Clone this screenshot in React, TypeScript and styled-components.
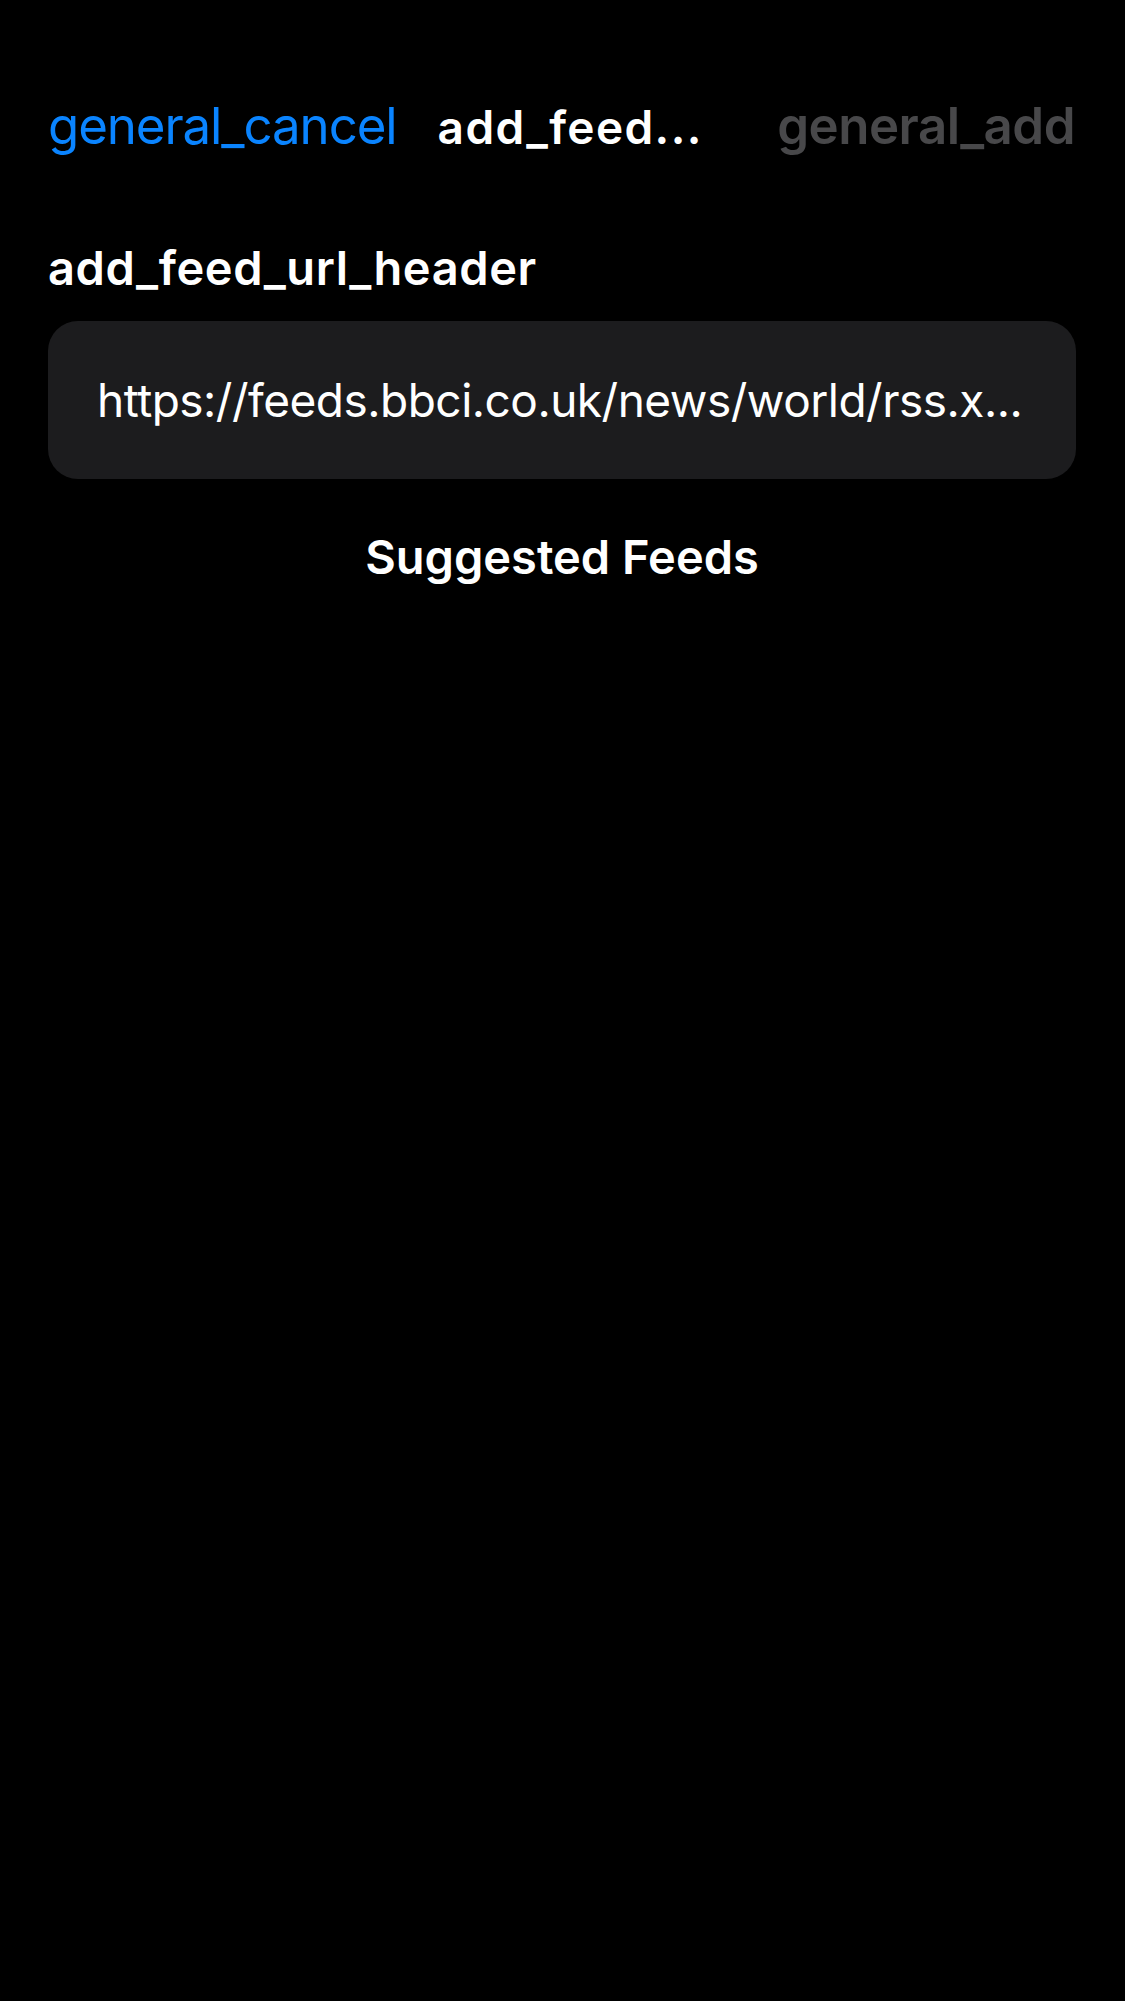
import { createGlobalStyle, styled } from "styled-components";

const GlobalStyle = createGlobalStyle`
  html, body {
    margin: 0;
    padding: 0;
    background: #000;
  }
  body {
    font-family: Inter, "Liberation Sans", sans-serif;
    -webkit-font-smoothing: antialiased;
  }
`;

const Screen = styled.div`
  min-height: 2001px;
  background: #000;
  color: #fff;
  display: flex;
  flex-direction: column;
`;

const NavBar = styled.div`
  display: flex;
  align-items: baseline;
  padding: 96px 50px 0 48px;
  height: 60px;
  line-height: 60px;
`;

const NavButton = styled.span<{ $tone: "accent" | "disabled" }>`
  font-size: 51px;
  font-weight: ${(p) => (p.$tone === "accent" ? 400 : 600)};
  letter-spacing: ${(p) => (p.$tone === "accent" ? "-1.1px" : "-0.5px")};
  color: ${(p) => (p.$tone === "accent" ? "#0a84ff" : "#48484a")};
  white-space: nowrap;
  margin-left: ${(p) => (p.$tone === "disabled" ? "auto" : "0")};
`;

const NavTitle = styled.span`
  font-size: 46px;
  font-weight: 600;
  letter-spacing: 1.4px;
  margin-left: 41px;
  white-space: nowrap;
`;

const Content = styled.div`
  display: flex;
  flex-direction: column;
  padding: 85px 49px 0 48px;
`;

const SectionLabel = styled.div`
  font-size: 47px;
  font-weight: 600;
  letter-spacing: 0.6px;
  line-height: 54px;
`;

const UrlField = styled.div`
  margin-top: 26px;
  height: 158px;
  border-radius: 30px;
  background: #1c1c1e;
  display: flex;
  align-items: center;
  padding: 0 30px 0 49px;
`;

const UrlText = styled.span`
  font-size: 46px;
  line-height: 56px;
  letter-spacing: -0.5px;
  white-space: nowrap;
`;

const SuggestedTitle = styled.div`
  margin-top: 50px;
  text-align: center;
  font-size: 47px;
  font-weight: 600;
  line-height: 56px;
`;

export default function App() {
  return (
    <>
      <GlobalStyle />
      <Screen>
        <NavBar>
          <NavButton $tone="accent">general_cancel</NavButton>
          <NavTitle>add_feed...</NavTitle>
          <NavButton $tone="disabled">general_add</NavButton>
        </NavBar>
        <Content>
          <SectionLabel>add_feed_url_header</SectionLabel>
          <UrlField>
            <UrlText>https://feeds.bbci.co.uk/news/world/rss.x...</UrlText>
          </UrlField>
          <SuggestedTitle>Suggested Feeds</SuggestedTitle>
        </Content>
      </Screen>
    </>
  );
}
